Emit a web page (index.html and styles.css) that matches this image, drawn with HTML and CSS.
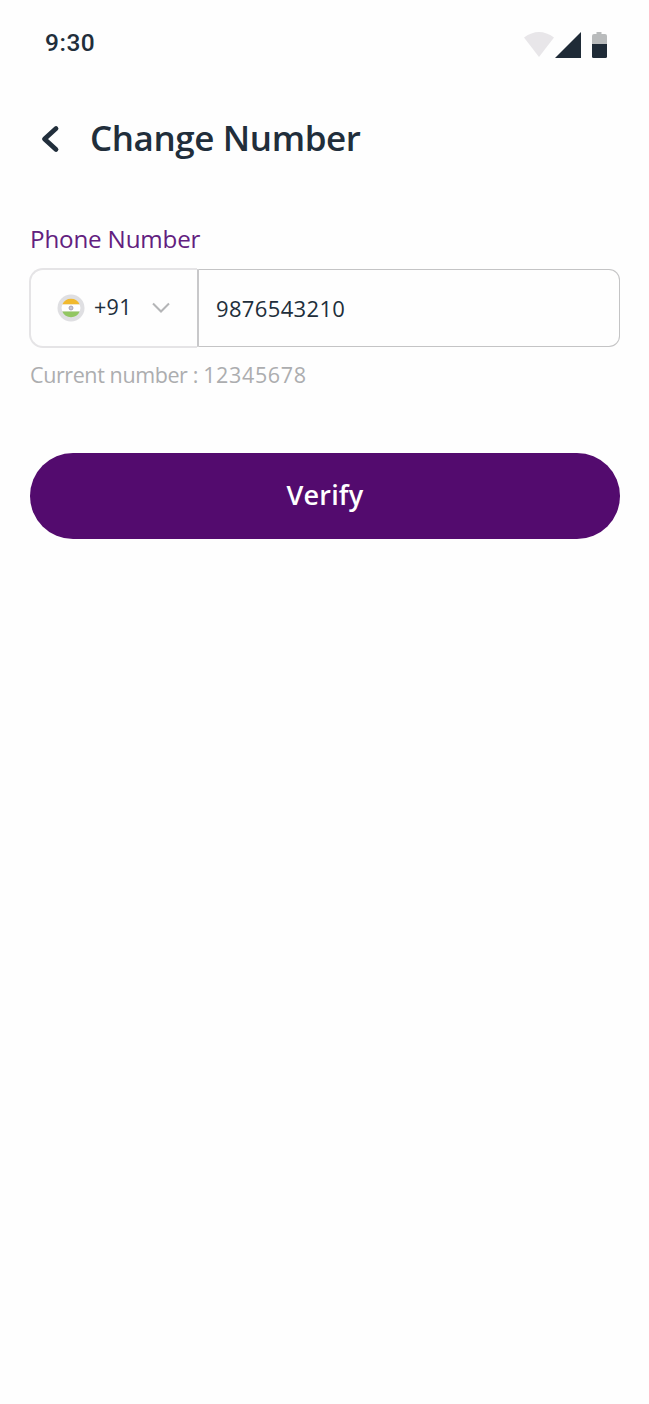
FILE: index.html
```html
<!DOCTYPE html>
<html lang="en">
<head>
<meta charset="utf-8">
<title>Change Number</title>
<link rel="stylesheet" href="styles.css">
</head>
<body>
<header class="status">
  <span class="time">9:30</span>
  <svg class="status-icons" width="84" height="28" viewBox="0 0 84 28">
    <path d="M0 6.500Q15-4.500 30 6.500L15 26Z" fill="#e8e6e9"/>
    <path d="M57 1v26H31Z" fill="#1f2b37"/>
    <path d="M68 27V5q0-2 2-2h2.500V1h5v2H81q2 0 2 2v10H68Z" fill="#b9bbbc"/>
    <path d="M68 13h15v12.500q0 1.500-1.500 1.500h-12q-1.500 0-1.500-1.500Z" fill="#1f2b37"/>
  </svg>
</header>
<div class="heading">
  <svg class="back" width="20" height="28" viewBox="0 0 20 28"><path d="M16 3.500L4.500 14 16 24.500" fill="none" stroke="#212e3b" stroke-width="4.800" stroke-linecap="round" stroke-linejoin="round"/></svg>
  <h1 class="title">Change Number</h1>
</div>
<main class="form">
  <label class="label" for="phone">Phone Number</label>
  <div class="field">
    <div class="country">
      <svg class="flag" width="28" height="28" viewBox="0 0 28 28">
        <circle cx="14" cy="14" r="13.500" fill="#dfdfe2"/>
        <path d="M5.300 10.500a9.500 9.500 0 0 1 17.400 0Z" fill="#f1b92e"/>
        <path d="M5.300 10.500h17.400q1.600 3.500 0 7H5.300q-1.600-3.500 0-7Z" fill="#fff"/>
        <path d="M5.300 17.500a9.500 9.500 0 0 0 17.400 0Z" fill="#92c662"/>
        <circle cx="14" cy="14" r="2" fill="#c9c6d2" stroke="#9c98ad" stroke-width=".8"/>
      </svg>
      <span class="code">+91</span>
      <svg class="chevron" width="20" height="14" viewBox="0 0 20 14"><path d="M2 2.500l8 8 8-8" fill="none" stroke="#b4b5b7" stroke-width="2"/></svg>
    </div>
    <div class="number"><span class="digits" id="phone">9876543210</span></div>
  </div>
  <div class="hint">Current number : <span class="current">12345678</span></div>
  <button class="verify"><span class="verify-text">Verify</span></button>
</main>
</body>
</html>
```
FILE: styles.css
```css
* { box-sizing: border-box; }
body { margin: 0; min-height: 1404px; background: #fefefe; color: #212e3b; font-family: "Open Sans", "Noto Sans", sans-serif; }
.status { display: flex; justify-content: space-between; height: 86px; padding: 31px 41px 0 45px; }
.time { font: 500 24.500px/24px Roboto, sans-serif; letter-spacing: .5px; }
.status-icons { display: block; }
.heading { display: flex; align-items: center; height: 106px; padding-left: 40px; gap: 30px; }
.title { margin: 0 0 2px; font-size: 35px; line-height: 48px; font-weight: 600; letter-spacing: -.4px; white-space: nowrap; }
.form { padding: 30px 29px 0 30px; display: flex; flex-direction: column; }
.label { height: 46px; font-size: 24.200px; line-height: 34px; color: #62207f; letter-spacing: -.17px; }
.field { display: flex; height: 80px; margin-left: -1px; }
.country { display: flex; align-items: center; width: 168px; padding-left: 26px; border: 2px solid #e5e4e6; border-right: 0; border-radius: 14px 0 0 14px; }
.code { margin: 0 0 2px 9px; font-size: 21.500px; line-height: 30px; letter-spacing: .3px; }
.chevron { margin-left: 19px; }
.number { flex: 1; display: flex; align-items: center; height: 78px; margin-top: 1px; padding-left: 17px; border: 1px solid #c4c4c5; border-left: 2px solid #c8c8ca; border-radius: 0 11px 11px 0; }
.digits { margin-bottom: 1px; font-size: 22px; line-height: 30px; letter-spacing: .35px; }
.hint { margin-top: 12px; height: 30px; font-size: 21.500px; line-height: 30px; color: #acadaf; white-space: nowrap; letter-spacing: -.4px; }
.current { letter-spacing: .65px; }
.verify { height: 86px; margin-top: 63px; padding: 0 0 2px; border: 0; border-radius: 43px; background: #530b6e; color: #fff; font: 600 27px/38px "Open Sans", "Noto Sans", sans-serif; letter-spacing: .2px; }
```
